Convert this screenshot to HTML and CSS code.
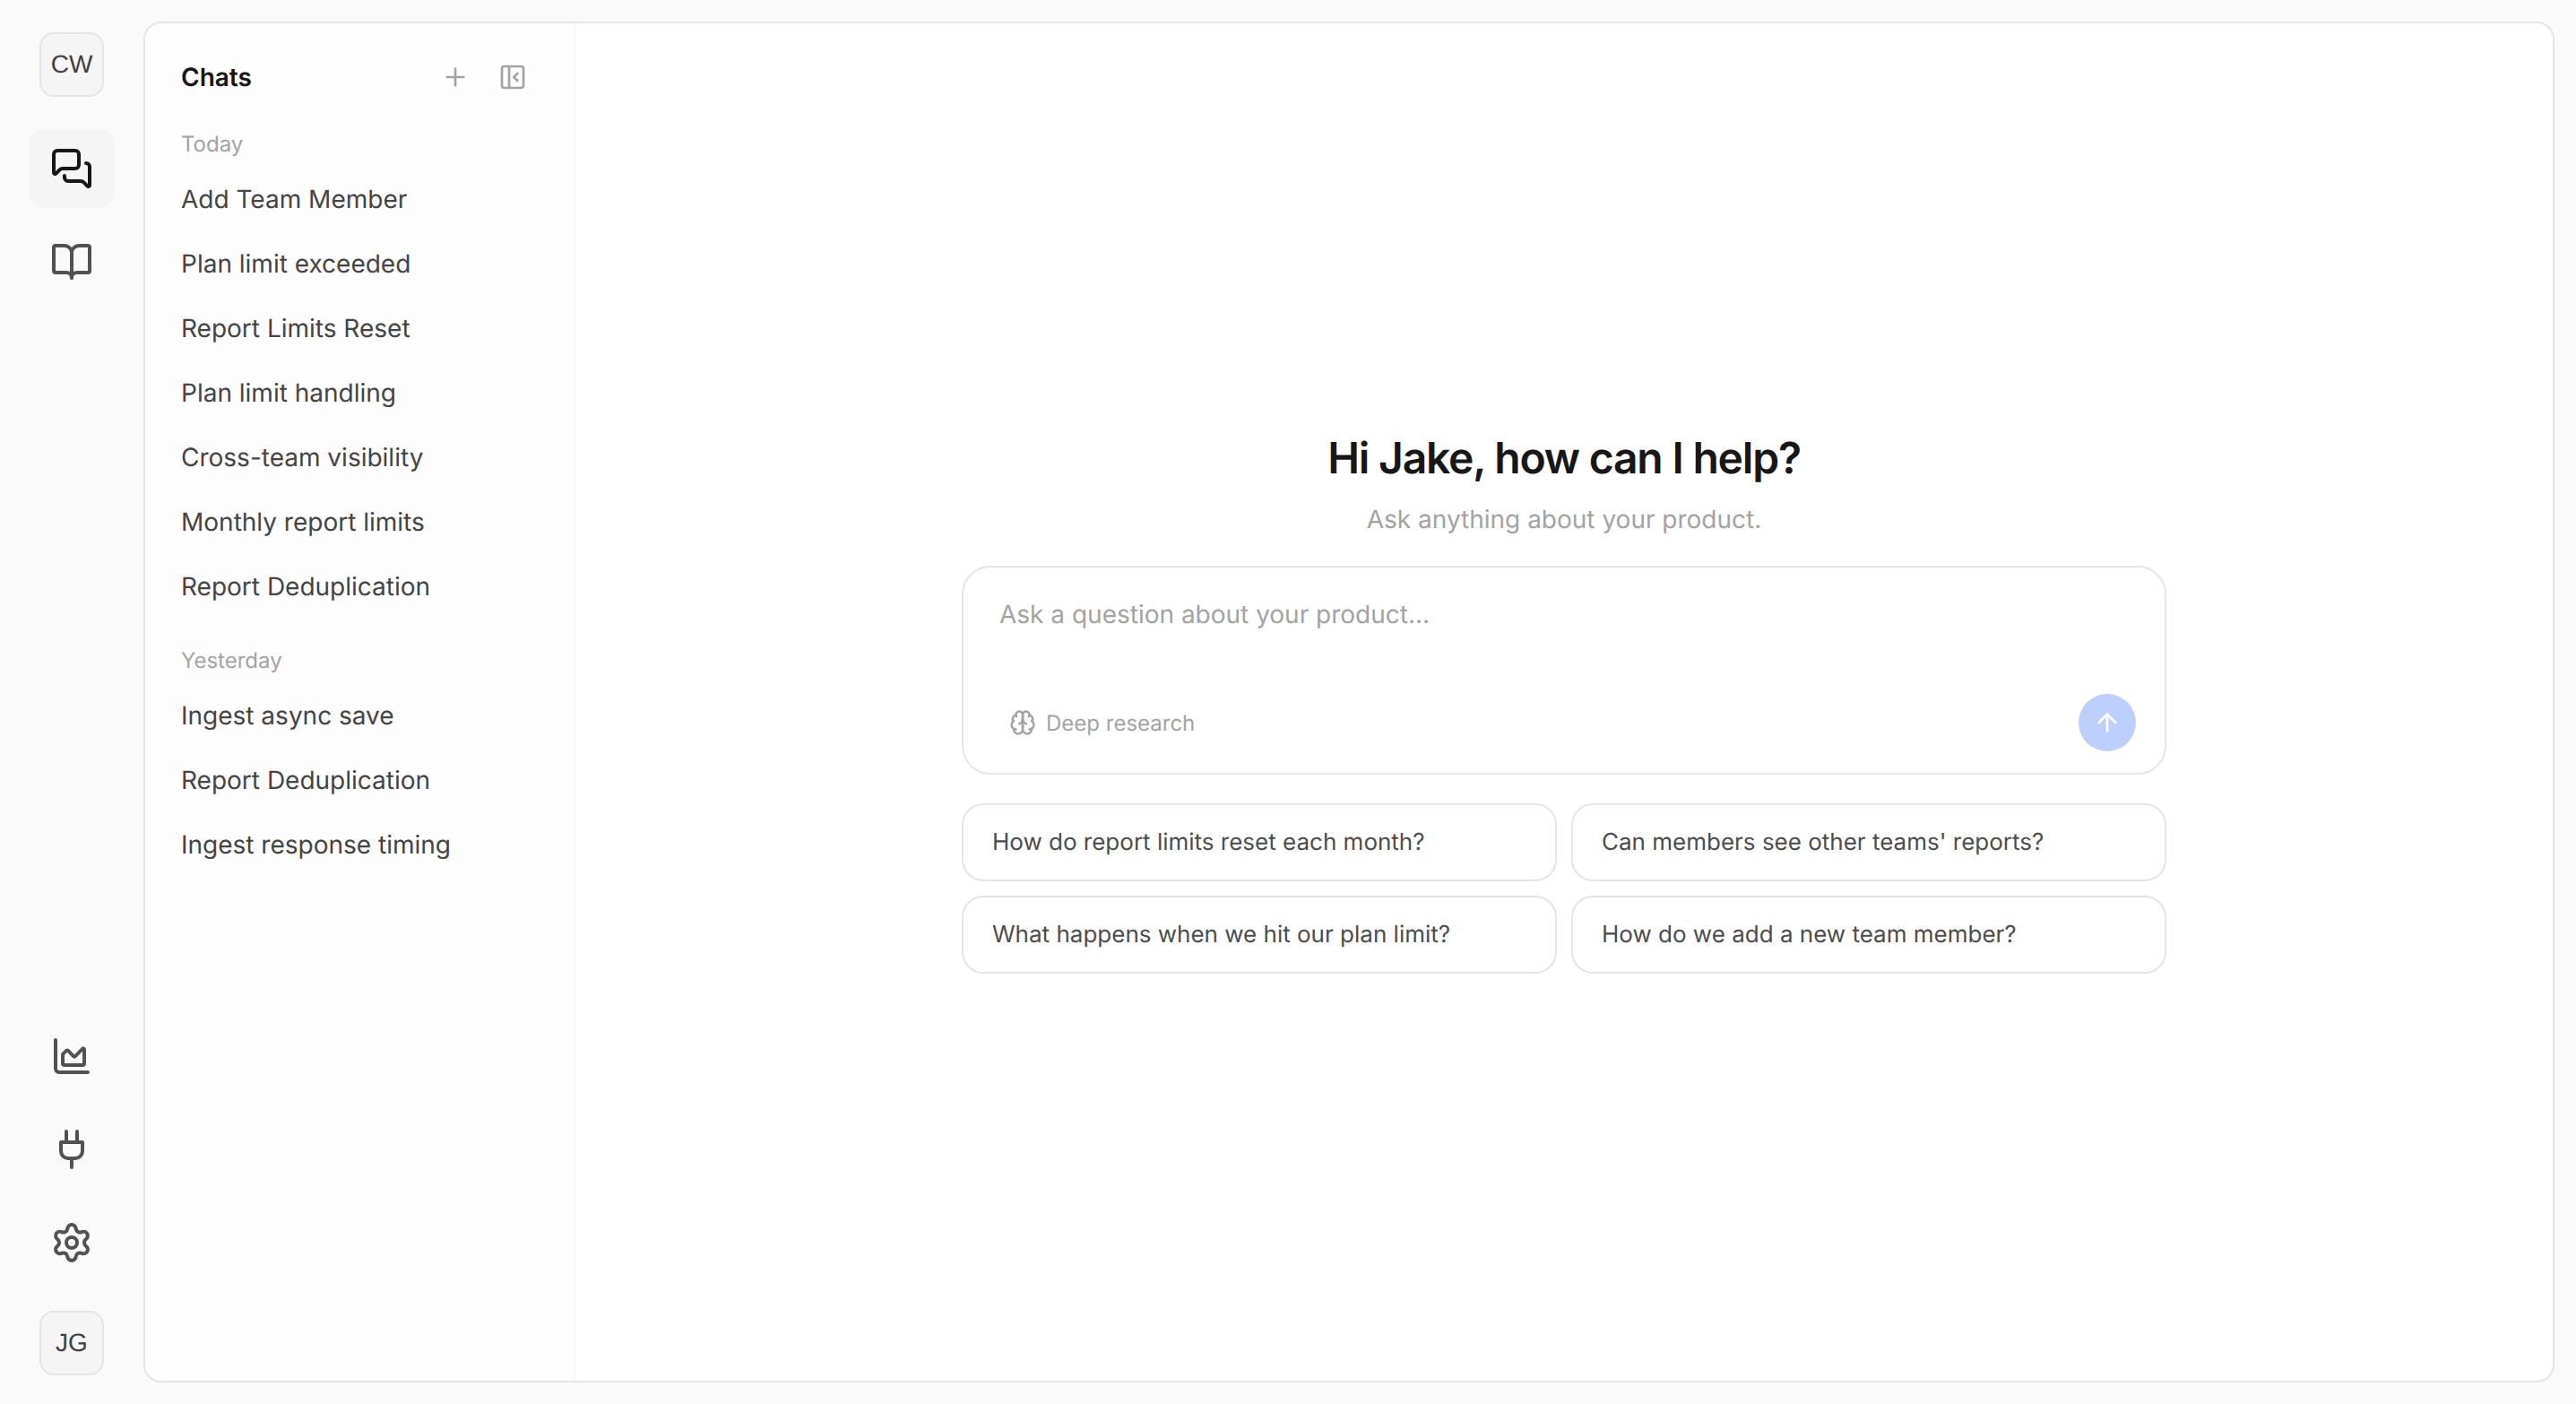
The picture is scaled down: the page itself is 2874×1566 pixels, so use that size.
FILE: index.html
```html
<!DOCTYPE html>
<html lang="en">
<head>
<meta charset="utf-8">
<title>Chats</title>
<link rel="stylesheet" href="styles.css">
</head>
<body>
<div class="app">
  <nav class="rail">
    <div class="avatar">CW</div>
    <div class="rail-top">
      <a class="rail-btn active"><svg class="ico" viewBox="0 0 24 24"><path d="M16 10a2 2 0 0 1-2 2H6.828a2 2 0 0 0-1.414.586l-2.202 2.202A.71.71 0 0 1 2 14.286V4a2 2 0 0 1 2-2h10a2 2 0 0 1 2 2z"/><path d="M20 9a2 2 0 0 1 2 2v10.286a.71.71 0 0 1-1.212.502l-2.202-2.202A2 2 0 0 0 17.172 19H10a2 2 0 0 1-2-2v-1"/></svg></a>
      <a class="rail-btn"><svg class="ico" viewBox="0 0 24 24"><path d="M12 7v14"/><path d="M3 18a1 1 0 0 1-1-1V4a1 1 0 0 1 1-1h5a4 4 0 0 1 4 4 4 4 0 0 1 4-4h5a1 1 0 0 1 1 1v13a1 1 0 0 1-1 1h-6a3 3 0 0 0-3 3 3 3 0 0 0-3-3z"/></svg></a>
    </div>
    <div class="rail-bottom">
      <a class="rail-btn"><svg class="ico" viewBox="0 0 24 24"><path d="M3 3v16a2 2 0 0 0 2 2h16"/><path d="M7 11.207a.5.5 0 0 1 .146-.353l2-2a.5.5 0 0 1 .708 0l3.292 3.292a.5.5 0 0 0 .708 0l4.292-4.292a.5.5 0 0 1 .854.353V16a1 1 0 0 1-1 1H8a1 1 0 0 1-1-1z"/></svg></a>
      <a class="rail-btn"><svg class="ico" viewBox="0 0 24 24"><path d="M12 22v-5"/><path d="M9 8V2"/><path d="M15 8V2"/><path d="M18 8v5a4 4 0 0 1-4 4h-4a4 4 0 0 1-4-4V8Z"/></svg></a>
      <a class="rail-btn"><svg class="ico" viewBox="0 0 24 24"><path d="M9.671 4.136a2.34 2.34 0 0 1 4.659 0 2.34 2.34 0 0 0 3.319 1.915 2.34 2.34 0 0 1 2.33 4.033 2.34 2.34 0 0 0 0 3.831 2.34 2.34 0 0 1-2.33 4.033 2.34 2.34 0 0 0-3.319 1.915 2.34 2.34 0 0 1-4.659 0 2.34 2.34 0 0 0-3.32-1.915 2.34 2.34 0 0 1-2.33-4.033 2.34 2.34 0 0 0 0-3.831A2.34 2.34 0 0 1 6.35 6.051a2.34 2.34 0 0 0 3.319-1.915"/><circle cx="12" cy="12" r="3"/></svg></a>
      <div class="avatar avatar-bottom">JG</div>
    </div>
  </nav>

  <div class="panel">
    <aside class="sidebar">
      <header class="side-head">
        <h2 class="side-title">Chats</h2>
        <div class="side-actions">
          <svg class="ico-sm" viewBox="0 0 24 24"><path d="M5 12h14"/><path d="M12 5v14"/></svg>
          <svg class="ico-sm" viewBox="0 0 24 24"><rect width="18" height="18" x="3" y="3" rx="2"/><path d="M9 3v18"/><path d="m16 15-3-3 3-3"/></svg>
        </div>
      </header>
      <section class="group">
        <div class="group-label">Today</div>
        <ul class="chat-list">
          <li class="chat-item">Add Team Member</li>
          <li class="chat-item">Plan limit exceeded</li>
          <li class="chat-item">Report Limits Reset</li>
          <li class="chat-item">Plan limit handling</li>
          <li class="chat-item">Cross-team visibility</li>
          <li class="chat-item">Monthly report limits</li>
          <li class="chat-item">Report Deduplication</li>
        </ul>
      </section>
      <section class="group">
        <div class="group-label">Yesterday</div>
        <ul class="chat-list">
          <li class="chat-item">Ingest async save</li>
          <li class="chat-item">Report Deduplication</li>
          <li class="chat-item">Ingest response timing</li>
        </ul>
      </section>
    </aside>

    <main class="main">
      <h1 class="title">Hi Jake, how can I help?</h1>
      <p class="subtitle">Ask anything about your product.</p>
      <div class="composer">
        <div class="placeholder">Ask a question about your product...</div>
        <div class="composer-foot">
          <div class="deep">
            <svg class="ico-brain" viewBox="0 0 24 24"><path d="M12 5a3 3 0 1 0-5.997.125 4 4 0 0 0-2.526 5.77 4 4 0 0 0 .556 6.588A4 4 0 1 0 12 18Z"/><path d="M12 5a3 3 0 1 1 5.997.125 4 4 0 0 1 2.526 5.77 4 4 0 0 1-.556 6.588A4 4 0 1 1 12 18Z"/><path d="M15 13a4.5 4.5 0 0 1-3-4 4.5 4.5 0 0 1-3 4"/><path d="M17.599 6.5a3 3 0 0 0 .399-1.375"/><path d="M6.003 5.125A3 3 0 0 0 6.401 6.5"/><path d="M3.477 10.896a4 4 0 0 1 .585-.396"/><path d="M19.938 10.5a4 4 0 0 1 .585.396"/><path d="M6 18a4 4 0 0 1-1.967-.516"/><path d="M19.967 17.484A4 4 0 0 1 18 18"/></svg>
            <span>Deep research</span>
          </div>
          <div class="send"><svg class="ico-send" viewBox="0 0 24 24"><path d="m5 12 7-7 7 7"/><path d="M12 19V5"/></svg></div>
        </div>
      </div>
      <div class="suggestions">
        <div class="suggestion">How do report limits reset each month?</div>
        <div class="suggestion">Can members see other teams' reports?</div>
        <div class="suggestion">What happens when we hit our plan limit?</div>
        <div class="suggestion">How do we add a new team member?</div>
      </div>
    </main>
  </div>
</div>
</body>
</html>
```

FILE: styles.css
```css
* { box-sizing: border-box; }
html, body { margin: 0; height: 100%; }
body {
  background: #fafafa;
  font-family: Inter, "Liberation Sans", sans-serif;
  color: #404040;
  overflow: hidden;
  text-rendering: geometricPrecision;
}
svg { fill: none; stroke: currentColor; stroke-width: 2; stroke-linecap: round; stroke-linejoin: round; display: block; }

.app { display: flex; height: 100vh; }

.rail {
  width: 160px;
  flex: none;
  display: flex;
  flex-direction: column;
  align-items: center;
  padding: 36px 0 32px;
}
.avatar {
  width: 72px;
  height: 72px;
  border: 2px solid #e5e5e5;
  border-radius: 16px;
  background: #f5f5f5;
  display: flex;
  align-items: center;
  justify-content: center;
  font: 28px/1 "Liberation Sans", sans-serif;
  color: #404040;
}
.rail-top { display: flex; flex-direction: column; gap: 16px; margin-top: 36px; }
.rail-bottom { display: flex; flex-direction: column; align-items: center; gap: 16px; margin-top: auto; }
.avatar-bottom { margin-top: 16px; }
.rail-btn {
  width: 96px;
  height: 88px;
  border-radius: 16px;
  display: flex;
  align-items: center;
  justify-content: center;
  color: #525252;
}
.rail-btn.active { background: #f5f5f5; color: #171717; }
.ico { width: 48px; height: 48px; }

.panel {
  flex: 1;
  display: flex;
  margin: 24px 24px 24px 0;
  background: #fff;
  border: 2px solid #e5e5e5;
  border-radius: 20px;
  overflow: hidden;
}

.sidebar {
  width: 480px;
  flex: none;
  background: #fdfdfd;
  border-right: 2px solid #f7f7f7;
  padding: 40px 52px 0 40px;
}
.side-head { display: flex; align-items: center; justify-content: space-between; height: 40px; margin-bottom: 39px; }
.side-title { margin: 0; font-size: 28px; line-height: 40px; font-weight: 600; color: #171717; }
.side-actions { display: flex; gap: 32px; color: #a3a3a3; }
.ico-sm { width: 32px; height: 32px; }

.group { margin-bottom: 31px; }
.group-label { font-size: 24px; line-height: 32px; color: #a3a3a3; margin-bottom: 9px; }
.chat-list { list-style: none; margin: 0; padding: 0; }
.chat-item { height: 72px; display: flex; align-items: center; font-size: 28px; color: #454545; white-space: nowrap; }

.main {
  flex: 1;
  display: flex;
  flex-direction: column;
  align-items: center;
  justify-content: center;
  padding-bottom: 1px;
}
.title { margin: 0; font-size: 48px; line-height: 64px; font-weight: 600; color: #171717; letter-spacing: -1.2px; }
.subtitle { margin: 16px 0 32px; font-size: 28px; line-height: 40px; color: #a3a3a3; }

.composer {
  width: 1344px;
  height: 233px;
  border: 2px solid #e5e5e5;
  border-radius: 32px;
  background: #fff;
  padding: 32px 32px 24px 40px;
  display: flex;
  flex-direction: column;
  justify-content: space-between;
}
.placeholder { font-size: 28px; line-height: 40px; color: #a3a3a3; }
.composer-foot { display: flex; align-items: center; justify-content: space-between; }
.deep { display: flex; align-items: center; gap: 11px; margin-left: 11px; font-size: 24px; color: #a3a3a3; }
.ico-brain { width: 30px; height: 30px; }
.send {
  width: 64px;
  height: 64px;
  border-radius: 50%;
  background: #bdd0fd;
  color: #fff;
  display: flex;
  align-items: center;
  justify-content: center;
}
.ico-send { width: 32px; height: 32px; }

.suggestions {
  width: 1344px;
  margin-top: 32px;
  display: grid;
  grid-template-columns: 1fr 1fr;
  gap: 16px;
}
.suggestion {
  height: 87px;
  border: 2px solid #e5e5e5;
  border-radius: 24px;
  padding-left: 32px;
  display: flex;
  align-items: center;
  font-size: 26px;
  color: #4d4d4d;
  white-space: nowrap;
}
```
